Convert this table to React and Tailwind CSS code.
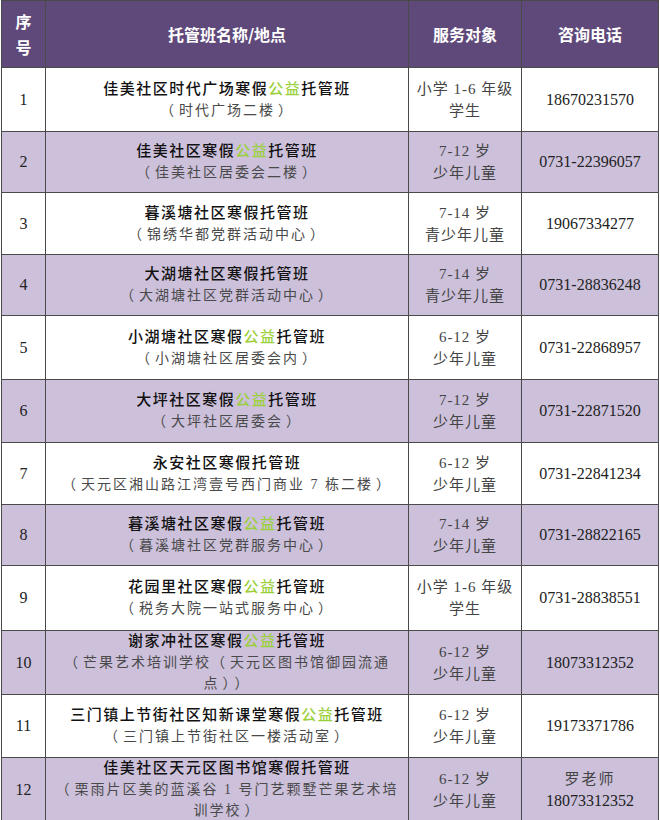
import React from "react";

const G = ({ children }) => <span className="text-[#9bd03c]">{children}</span>;

function P({ s }) {
  const parts = s.split(/([（）])/).filter((x) => x !== "");
  return (
    <>
      {parts.map((x, i) =>
        x === "（" ? (
          <span key={i} className="mr-[3px]">（</span>
        ) : x === "）" ? (
          <span key={i} className="ml-[3px]">）</span>
        ) : (
          <React.Fragment key={i}>{x}</React.Fragment>
        )
      )}
    </>
  );
}

const rows = [
  { n: "1", h: "h-[64px]", name: <>佳美社区时代广场寒假<G>公益</G>托管班</>, sub: ["（时代广场二楼）"], t: ["小学 1-6 年级", "学生"], p: ["18670231570"] },
  { n: "2", h: "h-[61px]", name: <>佳美社区寒假<G>公益</G>托管班</>, sub: ["（佳美社区居委会二楼）"], t: ["7-12 岁", "少年儿童"], p: ["0731-22396057"] },
  { n: "3", h: "h-[62px]", name: <>暮溪塘社区寒假托管班</>, sub: ["（锦绣华都党群活动中心）"], t: ["7-14 岁", "青少年儿童"], p: ["19067334277"] },
  { n: "4", h: "h-[61px]", name: <>大湖塘社区寒假托管班</>, sub: ["（大湖塘社区党群活动中心）"], t: ["7-14 岁", "青少年儿童"], p: ["0731-28836248"] },
  { n: "5", h: "h-[64px]", name: <>小湖塘社区寒假<G>公益</G>托管班</>, sub: ["（小湖塘社区居委会内）"], t: ["6-12 岁", "少年儿童"], p: ["0731-22868957"] },
  { n: "6", h: "h-[63px]", name: <>大坪社区寒假<G>公益</G>托管班</>, sub: ["（大坪社区居委会）"], t: ["7-12 岁", "少年儿童"], p: ["0731-22871520"] },
  { n: "7", h: "h-[62px]", name: <>永安社区寒假托管班</>, sub: ["（天元区湘山路江湾壹号西门商业 7 栋二楼）"], t: ["6-12 岁", "少年儿童"], p: ["0731-22841234"] },
  { n: "8", h: "h-[61px]", name: <>暮溪塘社区寒假<G>公益</G>托管班</>, sub: ["（暮溪塘社区党群服务中心）"], t: ["7-14 岁", "少年儿童"], p: ["0731-28822165"] },
  { n: "9", h: "h-[65px]", name: <>花园里社区寒假<G>公益</G>托管班</>, sub: ["（税务大院一站式服务中心）"], t: ["小学 1-6 年级", "学生"], p: ["0731-28838551"] },
  { n: "10", h: "h-[62px]", name: <>谢家冲社区寒假<G>公益</G>托管班</>, sub: ["（芒果艺术培训学校（天元区图书馆御园流通", "点））"], t: ["6-12 岁", "少年儿童"], p: ["18073312352"] },
  { n: "11", h: "h-[63px]", name: <>三门镇上节街社区知新课堂寒假<G>公益</G>托管班</>, sub: ["（三门镇上节街社区一楼活动室）"], t: ["6-12 岁", "少年儿童"], p: ["19173371786"] },
  { n: "12", h: "h-[62px]", name: <>佳美社区天元区图书馆寒假托管班</>, sub: ["（栗雨片区美的蓝溪谷 1 号门艺颗墅芒果艺术培", "训学校）"], t: ["6-12 岁", "少年儿童"], p: ["罗老师", "18073312352"] },
];

const cjk = "font-['Liberation_Serif','Noto_Sans_CJK_SC',serif]";

export default function App() {
  return (
    <div className="w-[660px] h-[820px] bg-white">
      <table className="ml-[1px] w-[657px] table-fixed border-collapse border border-[#4a4a4a]">
        <colgroup>
          <col className="w-[44px]" />
          <col className="w-[363px]" />
          <col className="w-[113px]" />
          <col className="w-[137px]" />
        </colgroup>
        <thead>
          <tr className="h-[67px] bg-[#5f497a] text-white font-['Noto_Sans_CJK_SC',sans-serif] font-bold text-[16px]">
            <th className="border border-[#4a4a4a] leading-[26px] p-0 align-middle">
              序<br />号
            </th>
            <th className="border border-[#4a4a4a] p-0">托管班名称/地点</th>
            <th className="border border-[#4a4a4a] p-0">服务对象</th>
            <th className="border border-[#4a4a4a] p-0">咨询电话</th>
          </tr>
        </thead>
        <tbody>
          {rows.map((r, i) => (
            <tr key={r.n} className={`${r.h} ${i % 2 === 1 ? "bg-[#ccc0da]" : "bg-white"}`}>
              <td className="border border-[#4a4a4a] p-0 text-center font-['Liberation_Serif',serif] text-[16px] text-[#222]">
                {r.n}
              </td>
              <td className={`border border-[#4a4a4a] p-0 text-center ${cjk}`}>
                <div className="text-[15px] leading-[21px] tracking-[1.5px] font-medium text-[#111]">{r.name}</div>
                {r.sub.map((s) => (
                  <div key={s} className="text-[14px] leading-[21px] tracking-[2px] text-[#4a4a4a] whitespace-nowrap">
                    <P s={s} />
                  </div>
                ))}
              </td>
              <td className={`border border-[#4a4a4a] p-0 text-center ${cjk} text-[15px] leading-[22px] tracking-[1px] text-[#444]`}>
                {r.t.map((x) => (
                  <div key={x}>{x}</div>
                ))}
              </td>
              <td className={`border border-[#4a4a4a] p-0 text-center ${cjk} text-[16px] leading-[22px] text-[#222]`}>
                {r.p.map((x) => (
                  <div key={x} className={x === "罗老师" ? "text-[15px] tracking-[2px] text-[#444]" : ""}>{x}</div>
                ))}
              </td>
            </tr>
          ))}
        </tbody>
      </table>
    </div>
  );
}
